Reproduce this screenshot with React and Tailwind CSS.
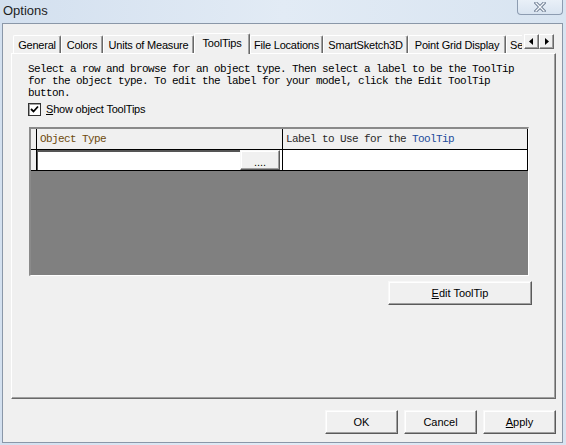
import React from 'react';

const sans = "font-['Liberation_Sans',Arial,sans-serif]";
const mono = "font-['Liberation_Mono','Courier_New',monospace]";

const tabs = [
    { label: 'General', w: 'w-[48px]' },
    { label: 'Colors', w: 'w-[42px]' },
    { label: 'Units of Measure', w: 'w-[91px]' },
    { label: 'ToolTips', w: 'w-[56px]', active: true },
    { label: 'File Locations', w: 'w-[73px]' },
    { label: 'SmartSketch3D', w: 'w-[85px]' },
    { label: 'Point Grid Display', w: 'w-[98px]' },
    { label: 'Se', w: 'w-[30px]', clipped: true },
];

const Btn = ({ children, className = '' }) => (
    <div className={`flex items-center justify-center bg-[#f0f0f0] border border-t-[#f8f8f8] border-l-[#f8f8f8] border-r-[#5a5a5a] border-b-[#5a5a5a] shadow-[inset_-1px_-1px_0_#a0a0a0,inset_1px_1px_0_#ffffff] text-[11px] text-black ${className}`}>
        {children}
    </div>
);

const Tab = ({ label, w, active, clipped }) => (
    <div
        className={`${w} shrink-0 flex whitespace-nowrap text-[11px] tracking-[-0.2px] leading-[13px] text-black bg-[#f0f0f0] border-l border-t border-l-white border-t-white rounded-tl-[2px] ${
            clipped ? 'justify-start pl-[3px]' : 'justify-center border-r border-r-[#696969] rounded-tr-[2px] shadow-[inset_-1px_0_0_#a0a0a0]'
        } ${active ? 'h-[21px] pt-[3px]' : 'mt-[2px] h-[18px] pt-[3px]'}`}
    >
        {label}
    </div>
);

const ArrowBtn = ({ dir }) => (
    <div className="w-[15px] h-[15px] flex items-center justify-center bg-[#f0f0f0] border border-t-white border-l-white border-r-[#696969] border-b-[#696969] shadow-[inset_-1px_-1px_0_#a0a0a0]">
        <svg width="5" height="7" viewBox="0 0 5 7">
            {dir === 'left' ? <path d="M4 0 L0 3.5 L4 7 Z" fill="#000" /> : <path d="M1 0 L5 3.5 L1 7 Z" fill="#000" />}
        </svg>
    </div>
);

export default function App() {
    return (
        <div className={`w-[566px] h-[445px] overflow-hidden flex flex-col bg-gradient-to-r from-[#d3e0ef] via-[#e2ebf5] to-[#d8e4f1] ${sans}`}>
            {/* caption */}
            <div className="h-[23px] flex items-start justify-between shrink-0">
                <span className="text-[13px] text-[#1e1e1e] pl-[3px] pt-[2px] leading-[17px]">Options</span>
                <div className="mr-[3px] w-[46px] h-[15px] flex items-center justify-center rounded-b-[4px] border border-t-0 border-[#8d9cb1] bg-gradient-to-b from-[#e9f0f8] to-[#d9e4f1]">
                    <svg width="12" height="10" viewBox="0 0 12 10">
                        <path d="M2 1 L10 9 M10 1 L2 9" stroke="#6e7d92" strokeWidth="3.2" strokeLinecap="square" />
                        <path d="M2 1 L10 9 M10 1 L2 9" stroke="#f5f8fc" strokeWidth="1.3" strokeLinecap="square" />
                    </svg>
                </div>
            </div>

            {/* dialog body */}
            <div className="ml-[2px] w-[561px] h-[420px] border border-[#8a97a8] bg-[#f0f0f0] flex flex-col">
                <div className="pl-[8px] pt-[9px] flex flex-col">
                    {/* tab strip */}
                    <div className="flex items-start h-[20px] pl-[2px]">
                        <div className="relative z-10 w-[509px] h-[21px] flex items-start overflow-hidden">
                            {tabs.map(t => <Tab key={t.label} {...t} />)}
                        </div>
                        <div className="flex mt-[1px] ml-[2px]">
                            <ArrowBtn dir="left" />
                            <ArrowBtn dir="right" />
                        </div>
                    </div>

                    {/* tab page */}
                    <div className="w-[545px] h-[346px] border border-t-white border-l-white border-r-[#696969] border-b-[#696969] shadow-[inset_-1px_-1px_0_#a0a0a0] pl-[16px] pt-[9px] flex flex-col">
                        <div className={`${mono} text-[11px] tracking-[-0.6px] leading-[12px] text-black whitespace-pre`}>
                            <div>Select a row and browse for an object type. Then select a label to be the ToolTip</div>
                            <div>for the object type. To edit the label for your model, click the Edit ToolTip</div>
                            <div>button.</div>
                        </div>

                        <div className="mt-[4px] h-[13px] flex items-center gap-[5px]">
                            <div className="w-[13px] h-[13px] bg-white border border-[#333] shadow-[inset_1px_1px_0_#a0a0a0] flex items-center justify-center">
                                <svg width="9" height="9" viewBox="0 0 9 9">
                                    <path d="M1 4 L3.5 6.5 L8 1.5" stroke="#000" strokeWidth="1.8" fill="none" />
                                </svg>
                            </div>
                            <span className="text-[11px] text-black leading-[13px] tracking-[-0.2px]">
                                <span className="underline underline-offset-1">S</span>how object ToolTips
                            </span>
                        </div>

                        {/* tooltip grid */}
                        <div className="mt-[11px] ml-[1px] w-[500px] h-[149px] border-l-2 border-t-2 border-l-[#8a8a8a] border-t-[#8a8a8a] border-r border-b border-r-white border-b-white flex flex-col">
                            <div className={`flex h-[21px] border-b border-black ${mono} text-[11px] tracking-[-0.6px] leading-[13px]`}>
                                <div className="w-[6px] bg-[#f0f0f0] border-r border-black" />
                                <div className="w-[246px] bg-[#f0f0f0] border-r border-black pl-[3px] pt-[4px] text-[#6e4a0c]">Object Type</div>
                                <div className="flex-1 bg-[#f0f0f0] border-r border-black pl-[3px] pt-[4px] text-[#2a2a2a]">
                                    Label to Use for the <span className="text-[#1d4c9c]">ToolTip</span>
                                </div>
                            </div>
                            <div className="flex h-[21px] border-b border-black">
                                <div className="w-[6px] bg-[#f0f0f0] border-r border-black" />
                                <div className="w-[246px] flex border-r border-black bg-white">
                                    <div className="w-[203px] bg-white border-t-2 border-l border-[#555]" />
                                    <Btn className="w-[40px] items-end pb-[2px] leading-[10px]">....</Btn>
                                </div>
                                <div className="flex-1 bg-white border-r border-black" />
                            </div>
                            <div className="flex-1 bg-[#808080]" />
                        </div>

                        <Btn className="mt-[5px] ml-[360px] w-[144px] h-[24px]">
                            <span>
                                <span className="underline underline-offset-1">E</span>dit ToolTip
                            </span>
                        </Btn>
                    </div>
                </div>

                {/* dialog buttons */}
                <div className="mt-[11px] flex justify-end gap-[6px] pr-[6px]">
                    <Btn className="w-[73px] h-[24px]">OK</Btn>
                    <Btn className="w-[73px] h-[24px]">Cancel</Btn>
                    <Btn className="w-[73px] h-[24px]">
                        <span>
                            <span className="underline underline-offset-1">A</span>pply
                        </span>
                    </Btn>
                </div>
            </div>
        </div>
    );
}
